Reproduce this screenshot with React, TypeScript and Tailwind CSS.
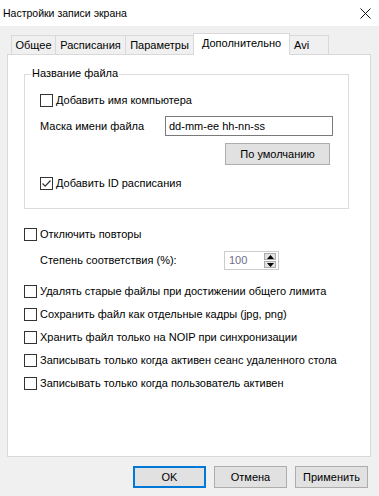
import React from 'react';

const font = { fontFamily: '"Liberation Sans", Arial, sans-serif' };

const CheckBox = ({ checked = false }: { checked?: boolean }) => (
  <span className="w-[13px] h-[13px] border border-[#333333] bg-white flex items-center justify-center shrink-0">
    {checked && (
      <svg width="11" height="11" viewBox="0 0 11 11">
        <path d="M1.5 5.5 L4.2 8.2 L9.5 2.5" fill="none" stroke="#333333" strokeWidth="1.2" />
      </svg>
    )}
  </span>
);

const CheckRow = ({ label, checked = false }: { label: string; checked?: boolean }) => (
  <div className="flex items-center h-[13px] gap-[3px]">
    <CheckBox checked={checked} />
    <span className="whitespace-nowrap leading-none">{label}</span>
  </div>
);

const tabs = [
  { label: 'Общее', w: 'w-[45px]' },
  { label: 'Расписания', w: 'w-[71px]' },
  { label: 'Параметры', w: 'w-[69px]' },
];

const App: React.FC = () => {
  return (
    <div className="w-[379px] h-[496px] bg-[#f0f0f0] text-[11px] text-black flex flex-col overflow-hidden" style={font}>
      {/* Title bar */}
      <div className="h-[26px] flex items-center justify-between pl-[3px] pr-[8px] bg-white">
        <span className="leading-none text-[10.5px]">Настройки записи экрана</span>
        <svg width="11" height="11" viewBox="0 0 11 11">
          <path d="M0.5 0.5 L10.5 10.5 M10.5 0.5 L0.5 10.5" stroke="#111" strokeWidth="1" />
        </svg>
      </div>

      {/* Tabs */}
      <div className="mt-[7px] pl-[11px] flex items-end h-[21px] relative z-10">
        {tabs.map((t) => (
          <div key={t.label} className={`${t.w} h-[19px] -ml-px first:ml-0 border border-b-0 border-[#d9d9d9] bg-[#f0f0f0] flex items-center justify-center whitespace-nowrap leading-none`}>
            {t.label}
          </div>
        ))}
        <div className="w-[97px] h-[22px] -ml-px -mb-px border border-b-0 border-[#d9d9d9] bg-white flex items-center justify-center whitespace-nowrap leading-none pb-[2px]">
          Дополнительно
        </div>
        <div className="w-[40px] h-[19px] -ml-px border border-b-0 border-[#d9d9d9] bg-[#f0f0f0] flex items-center pl-[4px] whitespace-nowrap leading-none">
          Avi
        </div>
      </div>

      {/* Panel */}
      <div className="ml-[7px] w-[364px] h-[403px] border border-[#d9d9d9] bg-white flex flex-col">
        {/* Group box */}
        <div className="ml-[16px] mt-[19px] w-[325px] h-[135px] border border-[#dcdcdc] relative pl-[15px] pt-[19px]">
          <span className="absolute -top-[7px] left-[6px] bg-white px-px leading-none">Название файла</span>
          <CheckRow label="Добавить имя компьютера" />
          <div className="mt-[9px] flex items-center h-[20px]">
            <span className="w-[125px] whitespace-nowrap leading-none">Маска имени файла</span>
            <div className="w-[168px] h-[20px] border border-[#7a7a7a] flex items-center pl-[3px] leading-none">
              dd-mm-ee hh-nn-ss
            </div>
          </div>
          <div className="mt-[7px] ml-[185px] w-[105px] h-[22px] border border-[#adadad] bg-[#e1e1e1] flex items-center justify-center leading-none">
            По умолчанию
          </div>
          <div className="mt-[12px]">
            <CheckRow label="Добавить ID расписания" checked />
          </div>
        </div>

        <div className="ml-[16px] mt-[19px]">
          <CheckRow label="Отключить повторы" />
        </div>
        <div className="ml-[32px] mt-[10px] flex items-center h-[19px]">
          <span className="w-[184px] whitespace-nowrap leading-none">Степень соответствия (%):</span>
          <div className="w-[55px] h-[19px] border border-[#cccccc] flex items-center justify-between pl-[4px] pr-[2px]">
            <span className="text-[#6d6d8a] leading-none">100</span>
            <div className="flex flex-col gap-px">
              <div className="w-[12px] h-[7px] border border-[#adadad] bg-[#e1e1e1] flex items-center justify-center">
                <svg width="7" height="4" viewBox="0 0 7 4"><path d="M0 4 L3.5 0 L7 4 Z" fill="#000" /></svg>
              </div>
              <div className="w-[12px] h-[7px] border border-[#adadad] bg-[#e1e1e1] flex items-center justify-center">
                <svg width="7" height="4" viewBox="0 0 7 4"><path d="M0 0 L3.5 4 L7 0 Z" fill="#000" /></svg>
              </div>
            </div>
          </div>
        </div>

        <div className="ml-[16px] mt-[15px] flex flex-col gap-[10px]">
          <CheckRow label="Удалять старые файлы при достижении общего лимита" />
          <CheckRow label="Сохранить файл как отдельные кадры (jpg, png)" />
          <CheckRow label="Хранить файл только на NOIP при синхронизации" />
          <CheckRow label="Записывать только когда активен сеанс удаленного стола" />
          <CheckRow label="Записывать только когда пользователь активен" />
        </div>
      </div>

      {/* Buttons */}
      <div className="mt-[9px] pr-[11px] flex justify-end gap-[8px]">
        <div className="w-[73px] h-[22px] border-2 border-[#0078d7] bg-[#e1e1e1] flex items-center justify-center leading-none">OK</div>
        <div className="w-[73px] h-[22px] border border-[#adadad] bg-[#e1e1e1] flex items-center justify-center leading-none">Отмена</div>
        <div className="w-[73px] h-[22px] border border-[#adadad] bg-[#e1e1e1] flex items-center justify-center leading-none">Применить</div>
      </div>
    </div>
  );
};

export default App;
